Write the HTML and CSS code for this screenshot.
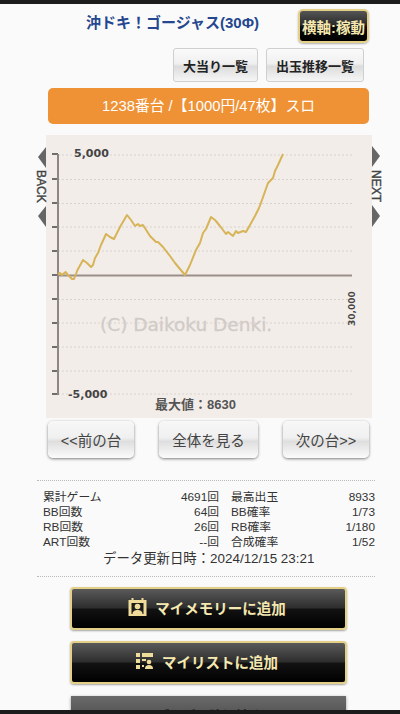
FILE: index.html
```html
<!DOCTYPE html>
<html lang="ja">
<head>
<meta charset="utf-8">
<title>沖ドキ！ゴージャス(30Φ)</title>
<link rel="stylesheet" href="styles.css">
</head>
<body>
<div class="topbar"></div>
<header class="head">
  <h1 class="title">沖ドキ！ゴージャス(30Φ)</h1>
  <button class="axis">横軸:稼動</button>
</header>
<nav class="links">
  <button class="link link-a">大当り一覧</button>
  <button class="link link-b">出玉推移一覧</button>
</nav>
<div class="banner">1238番台 /【1000円/47枚】スロ</div>
<svg class="chart" width="400" height="283" viewBox="0 135 400 283">
  <rect x="46" y="135" width="326" height="283" fill="#f3ede9"/>
  <g fill="#666">
    <path d="M46 147V168L38 157Z"/>
    <path d="M46 206V227L38 216Z"/>
    <path d="M372 146V167L380 156Z"/>
    <path d="M372 205V227L380 216Z"/>
  </g>
  <text class="side" transform="translate(37 170) rotate(90)">BACK</text>
  <text class="side" transform="translate(372 170) rotate(90)">NEXT</text>
  <g class="grid">
    <path d="M58 155H352M58 179.500H352M58 203.500H352M58 227H352M58 251H352M58 299.500H352M58 323H352M58 347H352M58 371H352M58 394H352"/>
  </g>
  <text class="mark" x="100" y="331">(C) Daikoku Denki.</text>
  <path class="ticks" d="M52 154H58M52 179H58M52 203H58M52 227H58M52 251H58M52 275H58M52 299H58M52 323H58M52 347H58M52 371H58M52 394H58"/>
  <path class="axis-y" d="M58 154V395"/>
  <path class="axis-x" d="M58 275.500H352"/>
  <path class="line" d="M58 274L60 273L62 275L65.500 272L68 275L72 279L74 279L77.500 270L83 260L87 263L91 267L93 265L95 258L98 253L101 245L106 234L110 237L114 239L120 227L127 215L131 220L135 226L138 224L140 226L143 225L150 236L156 242L158 242L163 247L170 256L175 263L185 275L190 265L196 250L200 243L203 233L206 229L211 217L215 220L220 226L226 234L228 232L233 236L236 231L238 233L243 231L246 232L250 225L255 216L259 208L262 200L268 183L273 178L275 171L278 165L283 154"/>
  <text class="val" x="74" y="157">5,000</text>
  <text class="val" x="68" y="398">-5,000</text>
  <text class="val val-small" transform="translate(355 326) rotate(-90)">30,000</text>
  <text class="max" x="155" y="409">最大値：8630</text>
</svg>
<div class="pager">
  <button class="page page-a">&lt;&lt;前の台</button>
  <button class="page page-b">全体を見る</button>
  <button class="page page-a">次の台&gt;&gt;</button>
</div>
<section class="info">
  <div class="stats">
    <div class="stat"><span>累計ゲーム</span><span>4691回</span></div>
    <div class="stat"><span>最高出玉</span><span>8933</span></div>
    <div class="stat"><span>BB回数</span><span>64回</span></div>
    <div class="stat"><span>BB確率</span><span>1/73</span></div>
    <div class="stat"><span>RB回数</span><span>26回</span></div>
    <div class="stat"><span>RB確率</span><span>1/180</span></div>
    <div class="stat"><span>ART回数</span><span>--回</span></div>
    <div class="stat"><span>合成確率</span><span>1/52</span></div>
  </div>
  <p class="updated">データ更新日時：2024/12/15 23:21</p>
</section>
<div class="actions">
  <button class="gold">
    <svg class="ico" width="19" height="18" viewBox="0 0 18 18"><path fill="#f0dc9a" d="M0 2H3V0H5V2H13V0H15V2H18V18H0Z"/><path fill="#1c1c1c" d="M3 5H15V16H3Z"/><circle cx="9" cy="8.500" r="2.800" fill="#f0dc9a"/><path fill="#f0dc9a" d="M4 16C4 13 6.500 12 9 12S14 13 14 16Z"/></svg>
    マイメモリーに追加
  </button>
  <button class="gold">
    <svg class="ico" width="18" height="18" viewBox="0 0 18 18"><g fill="#f0dc9a"><path d="M0 1H4V5H0ZM0 7H4V11H0ZM0 13H4V17H0ZM6 1H17V5H6ZM6 7H10V9H6ZM6 13H8V15H6Z"/><circle cx="13" cy="10" r="2.300"/><path d="M9 17C9 14 10.500 13 13 13S17 14 17 17Z"/></g></svg>
    マイリストに追加
  </button>
  <button class="gray">ブログに貼り付け</button>
</div>
<div class="bottombar"></div>
</body>
</html>
```
FILE: styles.css
```css
* { box-sizing: border-box; }
html, body { margin: 0; padding: 0; height: 714px; overflow: hidden; }
body {
  background: #fafafa;
  color: #333;
  font-family: "Liberation Sans", "Noto Sans CJK JP", sans-serif;
}
button { font-family: inherit; padding: 0; cursor: pointer; }

.topbar { height: 4px; background: #1c1c1c; }
.bottombar { position: fixed; left: 0; right: 0; bottom: 0; height: 4px; background: #1c1c1c; }

.head { display: flex; align-items: flex-start; height: 44px; }
.title {
  margin: 8px 0 0 86px;
  width: 212px;
  font-size: 15px;
  line-height: 22px;
  font-weight: bold;
  color: #24478f;
  white-space: nowrap;
}
.axis {
  margin-top: 5px;
  width: 71px;
  height: 34px;
  border: 2px solid #e3cf85;
  border-radius: 5px;
  background: linear-gradient(#555 0%, #2c2c2c 45%, #0c0c0c 55%, #000 100%);
  color: #f5e8b0;
  font-size: 14.500px;
  font-weight: bold;
  white-space: nowrap;
  box-shadow: 0 1px 2px rgba(0,0,0,.3);
}

.links { display: flex; gap: 8px; padding-left: 173px; }
.link {
  height: 34px;
  border: 1px solid #cfcfcf;
  border-radius: 3px;
  background: linear-gradient(#fafafa 0%, #f0f0f0 45%, #dcdcdc 55%, #f6f6f6 100%);
  color: #222;
  font-size: 13px;
  font-weight: bold;
}
.link-a { width: 85px; }
.link-b { width: 98px; }

.banner {
  margin: 6px 0 0 48px;
  width: 321px;
  height: 36px;
  border-radius: 5px;
  background: #ee9235;
  color: #fff;
  font-size: 14.800px;
  line-height: 36px;
  text-align: center;
}

.chart { display: block; margin-top: 11px; }
.side { font-size: 12px; fill: #444; stroke: #444; stroke-width: .4; }
.grid path { fill: none; stroke: #d8d3d0; stroke-width: 1; stroke-dasharray: 2 2; }
.mark { font-family: "DejaVu Sans", sans-serif; font-size: 18.500px; fill: #d0cbc7; stroke: #d0cbc7; stroke-width: .3; }
.ticks { fill: none; stroke: #444; stroke-width: 1.500; }
.axis-y { fill: none; stroke: #8f8582; stroke-width: 2; }
.axis-x { fill: none; stroke: #9c8f8b; stroke-width: 2; }
.line { fill: none; stroke: #d6b457; stroke-width: 2; stroke-linejoin: round; }
.val { font-family: "DejaVu Sans", sans-serif; font-size: 11px; font-weight: bold; fill: #444; }
.val-small { font-size: 9px; }
.max { font-size: 13px; font-weight: bold; fill: #555; }

.pager { display: flex; margin: 3px 0 0 48px; width: 321px; justify-content: space-between; }
.page {
  height: 37px;
  border: 0;
  border-radius: 5px;
  background: linear-gradient(#f7f7f7 0%, #f0f0f0 45%, #dedede 55%, #fbfbfb 100%);
  box-shadow: 0 1px 3px rgba(0,0,0,.5);
  color: #444;
  font-size: 14.500px;
  white-space: nowrap;
}
.page-a { width: 86px; }
.page-b { width: 99px; }

.info {
  margin: 22px 25px 0 37px;
  padding: 9px 0 9px 6px;
  border-top: 1px dotted #bbb;
  border-bottom: 1px dotted #bbb;
  height: 97px;
  font-size: 11.800px;
  color: #333;
}
.stats {
  display: grid;
  grid-template-columns: 176px 144px;
  column-gap: 12px;
  line-height: 15px;
}
.stat { display: flex; justify-content: space-between; }
.updated {
  margin: 0 0 0 60px;
  font-size: 13.400px;
  line-height: 18px;
  white-space: nowrap;
}

.actions {
  display: flex;
  flex-direction: column;
  align-items: center;
  gap: 11px;
  margin: 10px 53px 0 70px;
}
.gold {
  display: flex;
  align-items: center;
  justify-content: center;
  gap: 8px;
  width: 277px;
  height: 43px;
  padding: 0 3px 3px 0;
  border: 2px solid #e3cf85;
  border-radius: 4px;
  background: linear-gradient(#5a5a5a 0%, #2e2e2e 48%, #121212 52%, #000 100%);
  box-shadow: 0 1px 2px rgba(0,0,0,.35);
  color: #f5e8b0;
  font-size: 14.500px;
  font-weight: bold;
}
.ico { flex: none; }
.gray {
  flex: none;
  width: 275px;
  height: 36px;
  margin-top: 1px;
  border: 0;
  background: linear-gradient(#6a6a6a 0%, #555 50%, #333 100%);
  box-shadow: 0 1px 3px rgba(0,0,0,.4);
  color: #222;
  font-size: 13px;
  font-weight: bold;
}
```
